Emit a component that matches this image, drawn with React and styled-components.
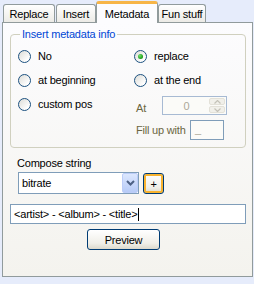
import React from 'react';
import styled, { createGlobalStyle } from 'styled-components';

const GlobalStyle = createGlobalStyle`
  html, body {
    margin: 0;
    padding: 0;
    background: #e6ecfb;
  }
  * {
    box-sizing: border-box;
  }
`;

const Window = styled.div`
  width: 254px;
  height: 284px;
  padding: 1px 0 0 2px;
  background: #e6ecfb;
  font-family: 'Liberation Sans', Arial, sans-serif;
  font-size: 11px;
  letter-spacing: -0.2px;
  color: #000;
`;

const TabStrip = styled.div`
  position: relative;
  z-index: 1;
  display: flex;
  align-items: flex-end;
  height: 21px;
  padding-left: 1px;
`;

const Tab = styled.div`
  display: flex;
  align-items: center;
  justify-content: center;
  width: ${(p) => p.$w}px;
  margin-left: ${(p) => p.$ml || 0}px;
  height: ${(p) => (p.$active ? 22 : 18)}px;
  margin-bottom: ${(p) => (p.$active ? -1 : 0)}px;
  border: 1px solid #919b9c;
  border-bottom: none;
  border-top: ${(p) => (p.$active ? '3px solid #f7b547' : '1px solid #919b9c')};
  border-radius: 3px 3px 0 0;
  background: ${(p) =>
    p.$active ? '#fcfcfe' : 'linear-gradient(#ffffff, #ecebe6)'};
  padding-top: ${(p) => (p.$active ? 0 : 1)}px;
  white-space: nowrap;
`;

const Panel = styled.div`
  width: 251px;
  height: 255px;
  border: 1px solid #919b9c;
  background: linear-gradient(#fcfcfe, #f4f3ee);
  display: flex;
  flex-direction: column;
`;

const Group = styled.fieldset`
  margin: 4px 6px 0 7px;
  padding: 6px 6px 7px 7px;
  border: 1px solid #d0d0bf;
  border-radius: 4px;
  display: grid;
  grid-template-columns: 116px 1fr;
  grid-template-rows: 18px 18px 19px 20px;
  row-gap: 6px;
  min-width: 0;
`;

const Legend = styled.legend`
  margin-left: 2px;
  padding: 0 2px;
  line-height: 14px;
  color: #0046d5;
`;

const RadioItem = styled.label`
  display: flex;
  align-items: center;
  gap: 7px;
  align-self: ${(p) => p.$align || 'center'};
  height: 18px;
`;

const RadioCircle = styled.span`
  position: relative;
  width: 13px;
  height: 13px;
  border-radius: 50%;
  border: 1px solid #1c5180;
  background: linear-gradient(135deg, #dcdcd7, #ffffff 80%);
  flex-shrink: 0;

  &::after {
    content: '';
    display: ${(p) => (p.$checked ? 'block' : 'none')};
    position: absolute;
    left: 3px;
    top: 3px;
    width: 5px;
    height: 5px;
    border-radius: 50%;
    background: radial-gradient(circle at 35% 35%, #6fe06b, #1a9a17 70%);
  }
`;

const SideRow = styled.div`
  display: flex;
  align-items: center;
  padding-left: 2px;
`;

const SideLabel = styled.span`
  width: ${(p) => p.$w}px;
  color: #6b6641;
  padding-top: ${(p) => p.$pt || 0}px;
`;

const Spin = styled.div`
  display: flex;
  align-items: center;
  width: 65px;
  height: 19px;
  margin-top: 2px;
  border: 1px solid #a7bad3;
  background: #fbfbf8;
  padding: 1px;
`;

const SpinValue = styled.span`
  flex: 1;
  text-align: center;
  color: #aca899;
`;

const SpinButtons = styled.div`
  display: flex;
  flex-direction: column;
  width: 16px;
  height: 100%;
  gap: 1px;
`;

const SpinHalf = styled.div`
  flex: 1;
  display: flex;
  align-items: center;
  justify-content: center;
  border: 1px solid #e3e1d8;
  border-radius: 2px;
  background: #f1f0ea;
`;

const SmallField = styled.div`
  width: 34px;
  height: 20px;
  border: 1px solid #7f9db9;
  background: #fbfbf8;
  color: #aca899;
  padding: 2px 0 0 4px;
`;

const ComposeLabel = styled.div`
  margin: 8px 0 0 14px;
  line-height: 14px;
`;

const SelectRow = styled.div`
  display: flex;
  gap: 4px;
  margin: 2px 0 0 15px;
`;

const Select = styled.div`
  display: flex;
  align-items: stretch;
  width: 121px;
  height: 22px;
  border: 1px solid #7f9db9;
  background: #fff;
`;

const SelectText = styled.span`
  flex: 1;
  display: flex;
  align-items: center;
  padding-left: 3px;
`;

const ArrowBtn = styled.span`
  width: 16px;
  display: flex;
  align-items: center;
  justify-content: center;
  border: 1px solid #bccdf8;
  border-radius: 2px;
  background: linear-gradient(#dce7fe, #b7cbf7);
`;

const Button = styled.button`
  font: inherit;
  letter-spacing: inherit;
  color: #000;
  width: ${(p) => p.$w}px;
  height: 21px;
  padding: 0;
  margin: ${(p) => p.$m || 0};
  border: 1px solid #003c74;
  border-radius: 3px;
  background: linear-gradient(#ffffff, #f0efe8 70%, #dcd9cc);
  box-shadow: ${(p) => (p.$focus ? 'inset 0 0 0 2px #f8b330' : 'none')};
  display: flex;
  align-items: center;
  justify-content: center;
`;

const TextField = styled.div`
  display: flex;
  align-items: center;
  margin: 10px 6px 0 7px;
  height: 20px;
  border: 1px solid #7f9db9;
  background: #fff;
  padding-left: 3px;
`;

const Caret = styled.span`
  width: 1px;
  height: 13px;
  margin-left: 1px;
  background: #000;
`;

const tabs = [
  { label: 'Replace', w: 52, ml: 0 },
  { label: 'Insert', w: 40, ml: 1 },
  { label: 'Metadata', w: 62, ml: 0, active: true },
  { label: 'Fun stuff', w: 48, ml: 0 },
];

const Radio = ({ label, checked, align }) => (
  <RadioItem $align={align}>
    <RadioCircle $checked={checked} />
    {label}
  </RadioItem>
);

const App = () => (
  <Window>
    <GlobalStyle />
    <TabStrip>
      {tabs.map((t) => (
        <Tab key={t.label} $w={t.w} $ml={t.ml} $active={t.active}>
          {t.label}
        </Tab>
      ))}
    </TabStrip>
    <Panel>
      <Group>
        <Legend>Insert metadata info</Legend>
        <Radio label="No" />
        <Radio label="replace" checked />
        <Radio label="at beginning" />
        <Radio label="at the end" />
        <Radio label="custom pos" align="start" />
        <SideRow>
          <SideLabel $w={26} $pt={6}>At</SideLabel>
          <Spin>
            <SpinValue>0</SpinValue>
            <SpinButtons>
              <SpinHalf>
                <svg width="7" height="4" viewBox="0 0 7 4">
                  <path d="M0.5 3.5 L3.5 0.5 L6.5 3.5" fill="none" stroke="#c4c2b8" strokeWidth="1.2" />
                </svg>
              </SpinHalf>
              <SpinHalf>
                <svg width="7" height="4" viewBox="0 0 7 4">
                  <path d="M0.5 0.5 L3.5 3.5 L6.5 0.5" fill="none" stroke="#c4c2b8" strokeWidth="1.2" />
                </svg>
              </SpinHalf>
            </SpinButtons>
          </Spin>
        </SideRow>
        <span />
        <SideRow>
          <SideLabel $w={54}>Fill up with</SideLabel>
          <SmallField>_</SmallField>
        </SideRow>
      </Group>

      <ComposeLabel>Compose string</ComposeLabel>
      <SelectRow>
        <Select>
          <SelectText>bitrate</SelectText>
          <ArrowBtn>
            <svg width="9" height="6" viewBox="0 0 9 6">
              <path d="M1 1 L4.5 4.5 L8 1" fill="none" stroke="#4d6185" strokeWidth="2" />
            </svg>
          </ArrowBtn>
        </Select>
        <Button $w={21} $focus $m="1px 0 0 0">+</Button>
      </SelectRow>

      <TextField>
        {'<artist> - <album> - <title>'}
        <Caret />
      </TextField>
      <Button $w={73} $m="5px 0 0 84px">Preview</Button>
    </Panel>
  </Window>
);

export default App;
